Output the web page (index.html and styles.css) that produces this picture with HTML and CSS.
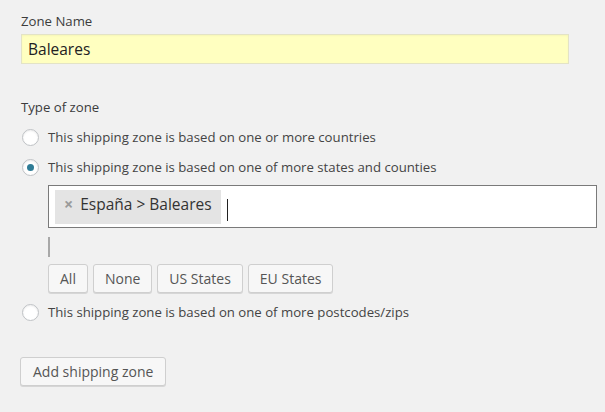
FILE: index.html
```html
<!DOCTYPE html>
<html>
<head>
<meta charset="utf-8">
<link rel="stylesheet" href="styles.css">
</head>
<body>
<div class="form">
  <label class="label label-first">Zone Name</label>
  <div class="text-input">Baleares</div>

  <div class="label label-type">Type of zone</div>

  <div class="radio-row">
    <span class="radio"></span>
    <span class="radio-text">This shipping zone is based on one or more countries</span>
  </div>
  <div class="radio-row">
    <span class="radio checked"></span>
    <span class="radio-text">This shipping zone is based on one of more states and counties</span>
  </div>

  <div class="indent">
    <div class="select-box">
      <span class="tag"><span class="tag-x">×</span><span class="tag-text">España &gt; Baleares</span></span>
      <span class="cursor"></span>
    </div>
    <div class="bar"></div>
    <div class="btn-row">
      <span class="btn">All</span>
      <span class="btn">None</span>
      <span class="btn">US States</span>
      <span class="btn">EU States</span>
    </div>
  </div>

  <div class="radio-row radio-last">
    <span class="radio"></span>
    <span class="radio-text">This shipping zone is based on one of more postcodes/zips</span>
  </div>

  <div class="submit-row">
    <span class="btn btn-add">Add shipping zone</span>
  </div>
</div>
</body>
</html>
```

FILE: styles.css
```css
html, body {
  margin: 0;
  padding: 0;
  background: #f1f1f1;
}
body {
  font-family: "Open Sans", "Noto Sans", sans-serif;
  font-size: 13.2px;
  color: #444;
  width: 605px;
  height: 412px;
  overflow: hidden;
}
.form {
  display: flex;
  flex-direction: column;
  align-items: flex-start;
  padding-left: 20px;
}
.label {
  display: block;
  line-height: 20px;
  color: #3c3c3c;
}
.label-first {
  margin-top: 11px;
  margin-left: 1px;
}
.text-input {
  box-sizing: border-box;
  margin-top: 3px;
  margin-left: 1px;
  width: 548px;
  height: 30px;
  background: #ffffc0;
  border: 1px solid #e3e3c6;
  font-size: 15.5px;
  line-height: 28px;
  padding-left: 6px;
  color: #222;
  box-shadow: inset 0 1px 2px rgba(0,0,0,0.04);
}
.label-type {
  margin-top: 33px;
  margin-left: 1px;
}
.radio-row {
  display: flex;
  align-items: center;
  height: 30px;
  margin-left: 2px;
}
.label-type + .radio-row {
  margin-top: 5px;
}
.radio {
  box-sizing: border-box;
  width: 17px;
  height: 17px;
  border-radius: 50%;
  border: 1px solid #bfc2c5;
  background: #fff;
  box-shadow: inset 0 1px 2px rgba(0,0,0,0.08);
  display: flex;
  align-items: center;
  justify-content: center;
  flex: none;
}
.radio.checked::after {
  content: "";
  width: 7px;
  height: 7px;
  border-radius: 50%;
  background: #2f7c96;
}
.radio-text {
  margin-left: 9px;
  line-height: 20px;
}
.indent {
  margin-left: 28px;
  display: flex;
  flex-direction: column;
  align-items: flex-start;
}
.select-box {
  box-sizing: border-box;
  margin-top: 3px;
  width: 549px;
  height: 43px;
  border: 1px solid #7a7a7a;
  background: #fff;
  padding: 3px 6px;
  display: flex;
  align-items: center;
}
.tag {
  box-sizing: border-box;
  height: 34px;
  background: #e4e4e4;
  display: flex;
  align-items: center;
  padding: 0 9px 6px 9px;
}
.tag-x {
  color: #9a9a9a;
  font-size: 16px;
  font-weight: bold;
  margin-right: 7px;
}
.tag-text {
  font-size: 15.5px;
  color: #333;
}
.cursor {
  width: 1px;
  height: 22px;
  background: #222;
  margin-left: 6px;
  margin-top: 6px;
}
.bar {
  margin-top: 9px;
  width: 2px;
  height: 20px;
  background: #a8a8a8;
}
.btn-row {
  margin-top: 7px;
  display: flex;
  gap: 5px;
}
.btn {
  box-sizing: border-box;
  display: inline-block;
  height: 29px;
  line-height: 27px;
  padding: 0 11px;
  font-size: 14px;
  color: #555;
  background: #f7f7f7;
  border: 1px solid #cfcfcf;
  border-radius: 3px;
  box-shadow: 0 1px 0 #d6d6d6;
  white-space: nowrap;
}
.radio-last {
  margin-top: 4px;
}
.submit-row {
  margin-top: 30px;
}
.btn-add {
  padding: 0 12px 0 12px;
}
```
